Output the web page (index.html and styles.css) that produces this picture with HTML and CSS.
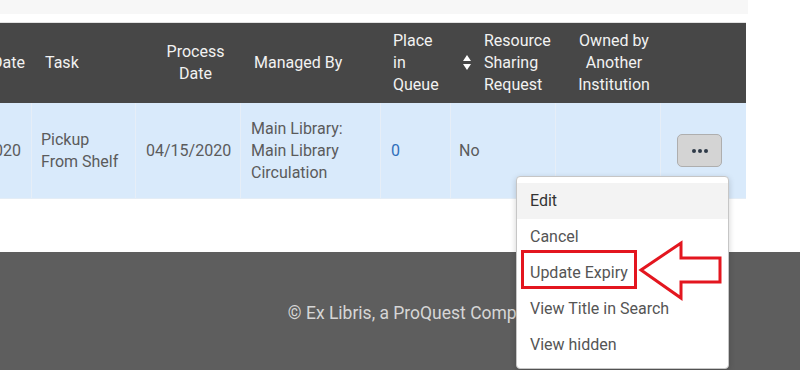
FILE: index.html
```html
<!DOCTYPE html>
<html>
<head>
<meta charset="utf-8">
<link rel="stylesheet" href="styles.css">
</head>
<body>
<div class="page">
  <div class="topstrip"></div>
  <div class="table">
    <div class="thead">
      <div class="th th-clip"><span>Date</span></div>
      <div class="th th-task">Task</div>
      <div class="th th-pdate">Process Date</div>
      <div class="th th-managed">Managed By</div>
      <div class="th th-place">Place in Queue</div>
      <div class="th th-rs">
        <span class="sort">
          <svg width="8" height="16" viewBox="0 0 8 16"><polygon points="4,0 8,6 0,6" fill="#fff"/><polygon points="0,9 8,9 4,15" fill="#fff"/></svg>
        </span>
        <span>Resource Sharing Request</span>
      </div>
      <div class="th th-owned">Owned by Another Institution</div>
      <div class="th"></div>
    </div>
    <div class="trow">
      <div class="td td-clip"><span>04/15/2020</span></div>
      <div class="td td-task">Pickup From Shelf</div>
      <div class="td">04/15/2020</div>
      <div class="td">Main Library: Main Library Circulation</div>
      <div class="td td-link">0</div>
      <div class="td td-no">No</div>
      <div class="td"></div>
      <div class="td td-act"><button class="more"><span class="dot"></span><span class="dot"></span><span class="dot"></span></button></div>
    </div>
  </div>
  <div class="spacer"></div>
  <footer class="footer">© Ex Libris, a ProQuest Company</footer>

  <ul class="menu">
    <li class="item active">Edit</li>
    <li class="item">Cancel</li>
    <li class="item">Update Expiry</li>
    <li class="item">View Title in Search</li>
    <li class="item">View hidden</li>
  </ul>
  <div class="redbox"></div>
  <svg class="arrow" width="100" height="70" viewBox="0 0 100 70">
    <polygon points="11,35 51,8 51,23 90,23 90,47 51,47 51,63" fill="#fff" stroke="#e3161f" stroke-width="3" stroke-linejoin="miter"/>
  </svg>
</div>
</body>
</html>
```
FILE: styles.css
```css
html, body {
  margin: 0;
  padding: 0;
  background: #fff;
  font-family: Roboto, "Liberation Sans", Arial, sans-serif;
  font-size: 16px;
  line-height: 22px;
}
.page {
  position: relative;
  width: 800px;
  height: 370px;
  overflow: hidden;
}
.topstrip {
  width: 748px;
  height: 14px;
  background: #f7f7f7;
  margin-bottom: 8px;
}
.table {
  width: 746px;
  border-top: 1px solid #e2e2e2;
}
.thead, .trow {
  display: grid;
  grid-template-columns: 31px 104px 105px 140px 70px 105px 105px 86px;
}
.thead {
  background: #474747;
  color: #f2f2f2;
  height: 80px;
}
.th {
  display: flex;
  align-items: center;
  box-sizing: border-box;
  padding: 0 4px 0 14px;
}
.th-clip, .td-clip {
  justify-content: flex-end;
  overflow: hidden;
  white-space: nowrap;
  padding: 0 6px 0 0;
}
.th-pdate {
  justify-content: center;
  text-align: center;
  padding: 0 0 0 16px;
}
.th-place {
  padding-left: 13px;
}
.th-rs {
  padding: 0 2px 0 13px;
  gap: 13px;
}
.sort {
  display: flex;
  flex: none;
}
.th-owned {
  justify-content: center;
  text-align: center;
  padding: 0 0 0 13px;
}
.trow {
  background: #d9eafb;
  color: #5b5b5b;
  height: 95px;
  border-bottom: 1px solid #e4edf6;
}
.td {
  display: flex;
  align-items: center;
  box-sizing: border-box;
  padding: 0 10px;
  border-left: 1px solid #e6eef7;
}
.td:first-child {
  border-left: none;
}
.td-clip {
  padding-right: 10px;
}
.td-task {
  padding: 0 10px 0 9px;
}
.td-link {
  color: #2f6fba;
}
.td-no {
  padding-left: 8px;
}
.td-act {
  padding-left: 16px;
}
.more {
  width: 45px;
  height: 33px;
  background: #d4d4d4;
  border: 1px solid #aeaeae;
  border-radius: 5px;
  display: flex;
  align-items: center;
  justify-content: center;
  gap: 2px;
  padding: 0;
}
.dot {
  width: 4px;
  height: 4px;
  border-radius: 50%;
  background: #2f3a48;
}
.spacer {
  height: 53px;
}
.footer {
  background: #5e5e5e;
  color: #d6d6d6;
  height: 118px;
  box-sizing: border-box;
  padding: 49px 0 0 32px;
  text-align: center;
  font-size: 17.5px;
  line-height: 24px;
}
.menu {
  position: absolute;
  left: 516px;
  top: 176px;
  width: 213px;
  box-sizing: border-box;
  margin: 0;
  padding: 6px 0 5px;
  list-style: none;
  background: #fff;
  border: 1px solid #c6c6c6;
  border-radius: 4px;
  box-shadow: 0 2px 6px rgba(0,0,0,0.18);
}
.item {
  height: 36px;
  line-height: 36px;
  padding-left: 13px;
  color: #555;
}
.item.active {
  background: #f3f3f3;
  color: #333;
}
.redbox {
  position: absolute;
  left: 521px;
  top: 250px;
  width: 116px;
  height: 39px;
  box-sizing: border-box;
  border: 3px solid #e3161f;
}
.arrow {
  position: absolute;
  left: 630px;
  top: 235px;
}
```
